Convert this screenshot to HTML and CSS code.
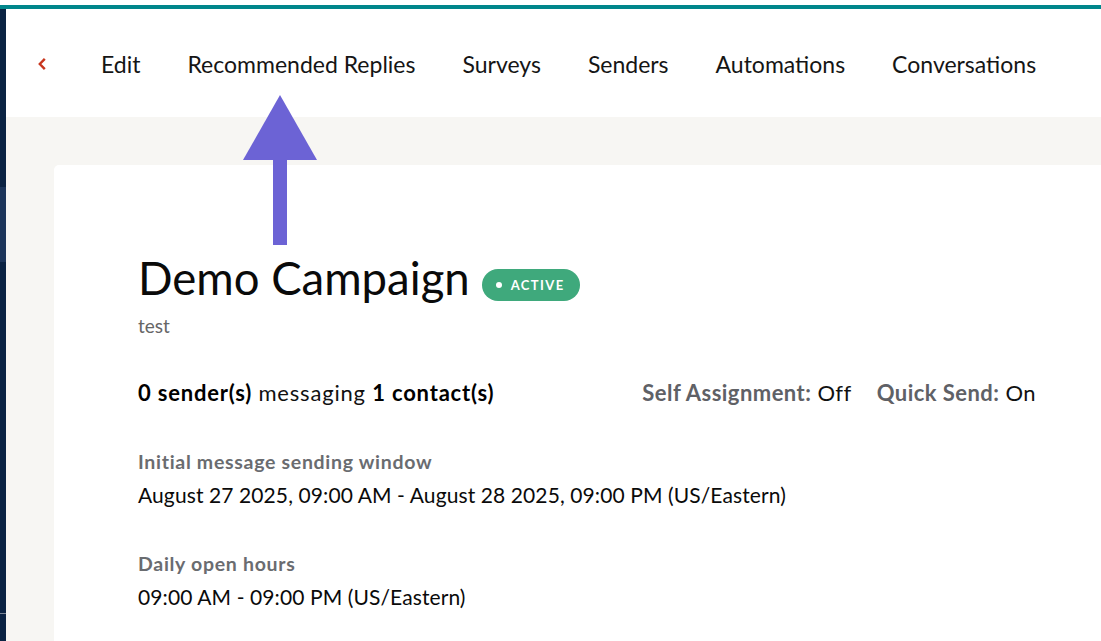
FILE: index.html
```html
<!DOCTYPE html>
<html lang="en">
<head>
<meta charset="utf-8">
<title>Demo Campaign</title>
<link rel="stylesheet" href="styles.css">
</head>
<body>
<div class="topline"></div>
<div class="app">
  <aside class="sidebar">
    <div class="side-top"></div>
    <div class="side-active"></div>
    <div class="side-mid"></div>
    <div class="side-rule"></div>
    <div class="side-bottom"></div>
  </aside>
  <main class="main">
    <nav class="tabs">
      <span class="back"><svg width="10" height="14" viewBox="0 0 10 14"><path d="M6.8 1.8 L1.8 7 L6.8 12.2" fill="none" stroke="#c8361e" stroke-width="2.4"/></svg></span>
      <a class="tab">Edit</a>
      <a class="tab">Recommended Replies</a>
      <a class="tab">Surveys</a>
      <a class="tab">Senders</a>
      <a class="tab">Automations</a>
      <a class="tab">Conversations</a>
    </nav>
    <section class="content">
      <div class="card">
        <div class="title-row">
          <h1 class="title">Demo Campaign</h1>
          <span class="badge"><span class="dot"></span>ACTIVE</span>
        </div>
        <div class="subtitle">test</div>
        <div class="stats-row">
          <div class="stats"><b>0 sender(s)</b> messaging <b>1 contact(s)</b></div>
          <div class="flags">
            <span><b class="muted">Self Assignment:</b> Off</span>
            <span><b class="muted">Quick Send:</b> On</span>
          </div>
        </div>
        <div class="field">
          <div class="label">Initial message sending window</div>
          <div class="value">August 27 2025, 09:00 AM - August 28 2025, 09:00 PM (US/Eastern)</div>
        </div>
        <div class="field">
          <div class="label">Daily open hours</div>
          <div class="value">09:00 AM - 09:00 PM (US/Eastern)</div>
        </div>
      </div>
    </section>
  </main>
</div>
<svg class="arrow" width="76" height="152" viewBox="0 0 76 152">
  <polygon points="37,0 74,65 0,65" fill="#6c63d5"/>
  <rect x="30" y="64" width="14" height="86" fill="#6c63d5"/>
</svg>
</body>
</html>
```
FILE: styles.css
```css
html, body {
  margin: 0;
  padding: 0;
  height: 100%;
  overflow: hidden;
  background: #ffffff;
  font-family: "Lato", "Open Sans", sans-serif;
  color: #111;
}
.topline {
  height: 5px;
  background: #fff;
  border-bottom: 4px solid #00868b;
}
.app {
  display: flex;
  height: calc(100% - 9px);
}
.sidebar {
  width: 6px;
  flex: none;
  display: flex;
  flex-direction: column;
  background: #0b2343;
}
.side-top { height: 178px; }
.side-active { height: 75px; background: #1c355a; }
.side-mid { height: 351px; }
.side-rule { height: 1px; background: #7a8596; }
.side-bottom { flex: 1; }
.main {
  flex: 1;
  display: flex;
  flex-direction: column;
  min-width: 0;
}
.tabs {
  height: 108px;
  flex: none;
  display: flex;
  align-items: center;
  padding: 2px 0 0 32px;
  background: #fff;
  gap: 47px;
  font-size: 23px;
  line-height: 28px;
  color: #151515;
  box-sizing: border-box;
}
.back {
  display: flex;
  width: 16px;
}
.tab { white-space: nowrap; }
.content {
  flex: 1;
  min-height: 0;
  overflow: hidden;
  background: #f7f6f3;
  padding: 48px 0 0 48px;
}
.card {
  width: 1066px;
  height: 500px;
  background: #fff;
  border-radius: 5px;
  box-sizing: border-box;
  padding: 86px 0 0 84px;
}
.card > * { width: 898px; }
.title-row {
  display: flex;
  align-items: flex-start;
  gap: 12px;
}
.title {
  margin: 0;
  font-weight: 400;
  font-size: 45.5px;
  line-height: 54px;
  color: #0a0a0a;
}
.badge {
  display: inline-flex;
  align-items: center;
  height: 32px;
  padding: 0 15px 0 14px;
  border-radius: 16px;
  background: #3fa97c;
  color: #fff;
  font-size: 13px;
  font-weight: 700;
  letter-spacing: 1.4px;
  margin-top: 18px;
}
.dot {
  width: 6px;
  height: 6px;
  border-radius: 50%;
  background: #fff;
  margin-right: 9px;
}
.subtitle {
  font-size: 19px;
  line-height: 24px;
  color: #666;
  margin-top: 9px;
}
.stats-row {
  display: flex;
  justify-content: space-between;
  align-items: baseline;
  margin-top: 41px;
  font-size: 22px;
  line-height: 28px;
  letter-spacing: 0.6px;
}
.stats { letter-spacing: 0.8px; }
.stats b { color: #000; }
.flags {
  display: flex;
  gap: 25px;
  letter-spacing: 0.45px;
}
.muted { color: #5f6166; }
.field { margin-top: 43px; }
.label {
  font-size: 19.5px;
  line-height: 24px;
  letter-spacing: 0.7px;
  font-weight: 700;
  color: #6a6c70;
}
.value {
  font-size: 21px;
  line-height: 28px;
  letter-spacing: 0.1px;
  margin-top: 7px;
  color: #0a0a0a;
}
.arrow {
  position: absolute;
  left: 243px;
  top: 95px;
}
```
